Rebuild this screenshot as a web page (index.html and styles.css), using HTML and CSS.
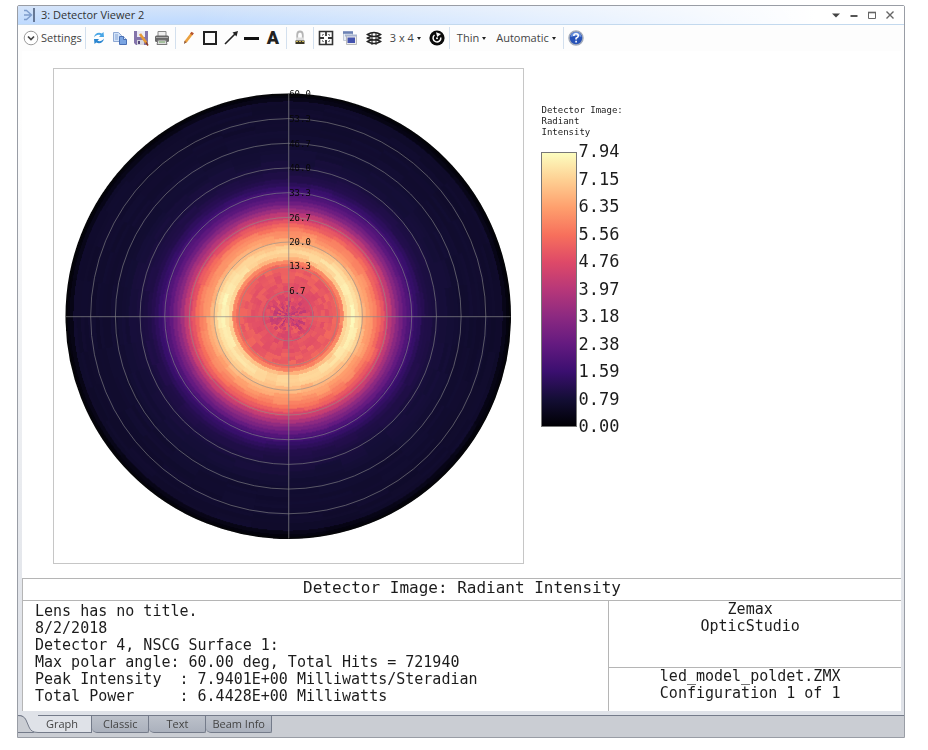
FILE: index.html
```html
<!DOCTYPE html>
<html lang="en">
<head>
<meta charset="utf-8">
<title>3: Detector Viewer 2</title>
<link rel="stylesheet" href="styles.css">
</head>
<body>
<main class="window">
  <header class="titlebar">
    <svg class="app-icon" width="14" height="14" viewBox="0 0 14 14" fill="none"><path d="M1 2.500h2.500L8.500 7l-5 4.500H1M1 7h7" stroke="#7d9ccc" stroke-width="1.400"/><path d="M11 0v14" stroke="#4d5e7c" stroke-width="1.600"/></svg>
    <h1 class="title">3: Detector Viewer 2</h1>
    <div class="window-buttons">
      <button type="button" aria-label="Window menu"><svg width="10" height="10" viewBox="0 0 10 10"><path d="M1 3.500h8L5 7.500z" fill="#444"/></svg></button>
      <button type="button" aria-label="Minimize"><svg width="10" height="10" viewBox="0 0 10 10"><path d="M1.500 6h7" stroke="#555" stroke-width="2"/></svg></button>
      <button type="button" aria-label="Maximize"><svg width="10" height="10" viewBox="0 0 10 10"><path d="M1.500 2v6.500h7V2" fill="none" stroke="#666"/><path d="M1 2.500h8" stroke="#666" stroke-width="1.600"/></svg></button>
      <button type="button" aria-label="Close"><svg width="10" height="10" viewBox="0 0 10 10"><path d="M1.500 1.500l7 7m0-7l-7 7" stroke="#666" stroke-width="1.400"/></svg></button>
    </div>
  </header>

  <nav class="toolbar" aria-label="Viewer tools">
    <div class="group">
      <button type="button" class="settings"><svg width="16" height="16" viewBox="0 0 16 16" fill="none"><circle cx="8" cy="8" r="6.800" fill="#fff" stroke="#999"/><path d="M5 6.500l3 3 3-3" stroke="#444" stroke-width="1.700"/></svg>Settings</button>
    </div>
    <div class="group icons">
      <button type="button" aria-label="Update"><svg width="16" height="16" viewBox="0 0 16 16"><path d="M3 7.500C3.500 3.500 7.500 1.500 10.800 3.500L12.500 2l.5 5H8l1.500-1.700C7 4.300 5 5 3 7.500z" fill="#49a6e6"/><path d="M13 8.500c-.5 4-4.500 6-7.800 4L3.500 14 3 9h5l-1.500 1.700c2.500 1 4.500.3 6.500-2.200z" fill="#2a86d0"/></svg></button>
      <button type="button" aria-label="Copy"><svg width="16" height="16" viewBox="0 0 16 16"><path d="M1.500 2.500h5l3 3v6h-8z" fill="#d3e3f8" stroke="#8fa9d4"/><path d="M3 5h3M3 7h3M3 9h3" stroke="#88a5d4"/><path d="M7.500 6.500h4l3 3v5h-7z" fill="#7ba5e2" stroke="#4a70b4"/><path d="M11.500 6.500v3h3" fill="#e3eefb" stroke="#4a70b4"/></svg></button>
      <button type="button" aria-label="Save"><svg width="16" height="16" viewBox="0 0 16 16"><path d="M1 1h14v14H3l-2-2z" fill="#8474ab"/><path d="M4 1h8v6H4z" fill="#eceaf4"/><path d="M4 10h7v5H4z" fill="#d7d6df"/><path d="M5 11h2v3H5z" fill="#584b7c"/><path d="M7 4l6.500 9" stroke="#e79a36" stroke-width="2.600"/><path d="M13 12.500l2 3" stroke="#8b3c20" stroke-width="1.500"/></svg></button>
      <button type="button" aria-label="Print"><svg width="16" height="16" viewBox="0 0 16 16"><path d="M4 1.500h8v5H4z" fill="#eee" stroke="#888"/><rect x="1" y="5.500" width="14" height="6.500" rx="1.500" fill="#686868"/><path d="M2 7.500h12" stroke="#aaa"/><path d="M4 10h8l1 4.500H3z" fill="#ddd" stroke="#777"/><path d="M5 12h6" stroke="#6da35f"/></svg></button>
    </div>
    <div class="group icons">
      <button type="button" aria-label="Pencil"><svg width="16" height="16" viewBox="0 0 16 16"><path d="M4.500 12L11 3.500" stroke="#eaa03e" stroke-width="2.800"/><path d="M10.300 4.500l1.400-2" stroke="#b55430" stroke-width="3"/><path d="M3 14l.5-3.300 2 1.600z" fill="#8a5130"/></svg></button>
      <button type="button" aria-label="Rectangle"><svg width="16" height="16" viewBox="0 0 16 16"><path d="M2 2h12v12H2z" fill="none" stroke="#222" stroke-width="2"/></svg></button>
      <button type="button" aria-label="Arrow"><svg width="16" height="16" viewBox="0 0 16 16"><path d="M2 14L12 4" stroke="#222" stroke-width="1.600"/><path d="M15 1l-1.500 5.500L9.500 2.500z" fill="#222"/></svg></button>
      <button type="button" aria-label="Line"><svg width="16" height="16" viewBox="0 0 16 16"><path d="M0 8.500h15" stroke="#111" stroke-width="3"/></svg></button>
      <button type="button" class="letter" aria-label="Text">A</button>
    </div>
    <div class="group">
      <button type="button" aria-label="Lock"><svg width="16" height="16" viewBox="0 0 16 16"><path d="M5.200 8V5a2.800 3.500 0 0 1 5.600 0v3" fill="none" stroke="#b5b5b5" stroke-width="1.800"/><path d="M4 7.500h8V11H4z" fill="#ddd"/><path d="M3.500 10.500h9v3.500h-9z" fill="#373322"/><path d="M4 11.500h8" stroke="#c9b452" stroke-dasharray="2 1"/></svg></button>
    </div>
    <div class="group wide">
      <button type="button" aria-label="Fit window"><svg width="16" height="16" viewBox="0 0 16 16" fill="none" stroke="#333"><path d="M1.500 1.500h13v13h-13z" stroke-width="1.600"/><path d="M8 2v4M8 10v4M2 8h4M10 8h4" stroke-width="1.800"/><path d="M4.500 6V4.500H6M10 4.500h1.500V6M11.500 10v1.500H10M6 11.500H4.500V10" stroke="#888"/></svg></button>
      <button type="button" aria-label="Clone window"><svg width="16" height="16" viewBox="0 0 16 16"><path d="M1.500 2.500h9v8h-9z" fill="#e7edf6" stroke="#c4cbd8"/><path d="M1 2.500h10" stroke="#6d82b4" stroke-width="2.600"/><path d="M4.500 5.500h10v9h-10z" fill="#eee" stroke="#bbb"/><path d="M3 5.500h12" stroke="#a9b4cf" stroke-width="2"/><path d="M5.500 7.500h7.500v5.500H5.500z" fill="#4453ae"/></svg></button>
      <button type="button" aria-label="Layers"><svg width="16" height="16" viewBox="0 0 16 16" fill="#fff" stroke="#222" stroke-width="1.500"><path d="M1.500 11.500q6.500-4 13 0q-6.500 4-13 0z"/><path d="M1.500 8q6.500-4 13 0q-6.500 4-13 0z"/><path d="M1.500 4.500q6.500-4 13 0q-6.500 4-13 0z"/><path d="M6 3v12M10 3v12" stroke-width="1"/></svg></button>
      <button type="button" class="menu">3 x 4<span class="caret"></span></button>
      <button type="button" aria-label="Reset view"><svg width="16" height="16" viewBox="0 0 16 16"><circle cx="8" cy="8" r="7.600" fill="#0b0b0b"/><path d="M5.500 5A3.900 3.900 0 1 0 11.800 7.500" fill="none" stroke="#fff" stroke-width="1.500"/><path d="M7 2.200l5 1.800-3.800 3z" fill="#fff"/><circle cx="8" cy="8.300" r="1" fill="#fff"/></svg></button>
    </div>
    <div class="group menus">
      <button type="button" class="menu">Thin<span class="caret"></span></button>
      <button type="button" class="menu">Automatic<span class="caret"></span></button>
    </div>
    <div class="group help">
      <button type="button" aria-label="Help"><svg width="16" height="16" viewBox="0 0 16 16"><circle cx="8" cy="8" r="7" fill="#2853b8" stroke="#a3abba" stroke-width="1.500"/><path d="M2.500 7a5.500 5 0 0 1 11 0q-5-2-11 0z" fill="#6e94dc"/><path d="M5.800 6q0-2.200 2.300-2.200T10.300 6Q10.300 7 8.100 8.300v1.200M8.100 10.700v1.700" fill="none" stroke="#fff" stroke-width="1.600"/></svg></button>
    </div>
  </nav>

  <section class="graph">
    <div class="view">
      <div class="plot">
        <canvas id="map" width="471" height="496"></canvas>
        <svg id="grid" viewBox="0 0 471 496" role="img" aria-label="Polar radiant intensity plot"></svg>
      </div>
      <aside class="legend">
        <p class="legend-title">Detector Image:<br>Radiant<br>Intensity</p>
        <div class="scale">
          <div class="ramp"></div>
          <ol class="ticks">
            <li>7.94</li><li>7.15</li><li>6.35</li><li>5.56</li><li>4.76</li><li>3.97</li><li>3.18</li><li>2.38</li><li>1.59</li><li>0.79</li><li>0.00</li>
          </ol>
        </div>
      </aside>
    </div>

    <div class="report">
      <h2 class="report-title">Detector Image: Radiant Intensity</h2>
      <pre class="details">Lens has no title.
8/2/2018
Detector 4, NSCG Surface 1:
Max polar angle: 60.00 deg, Total Hits = 721940
Peak Intensity  : 7.9401E+00 Milliwatts/Steradian
Total Power     : 6.4428E+00 Milliwatts</pre>
      <div class="source">
        <p>Zemax<br>OpticStudio</p>
        <p>led_model_poldet.ZMX<br>Configuration 1 of 1</p>
      </div>
    </div>
  </section>

  <footer class="tabs" role="tablist">
    <button type="button" role="tab" aria-selected="true" class="tab active"><svg class="slope" width="20" height="18" viewBox="0 0 20 18"><path d="M0 0h20v18Q13 18 11 12L8 4Q6 0 0 0z" fill="#dfe2e8"/><path d="M0 .5Q6 .5 8 5l3 7q2 5.500 9 5.500" fill="none" stroke="#747b8a"/></svg><span>Graph</span></button>
    <button type="button" role="tab" aria-selected="false" class="tab">Classic</button>
    <button type="button" role="tab" aria-selected="false" class="tab">Text</button>
    <button type="button" role="tab" aria-selected="false" class="tab">Beam Info</button>
  </footer>
</main>
<script src="plot.js"></script>
</body>
</html>
```
FILE: styles.css
```css
* { box-sizing: border-box; }

body {
  margin: 0;
  padding: 5px 23px 11px 17px;
  background: #fff;
  color: #1c1c1c;
  font: 11px/16px "Open Sans", "Noto Sans", sans-serif;
}

h1, h2, p, ol, pre { margin: 0; padding: 0; font: inherit; }
ol { list-style: none; }
svg, canvas { display: block; }

button {
  display: flex;
  align-items: center;
  margin: 0;
  padding: 0;
  border: 0;
  background: none;
  color: #444;
  font: inherit;
}

.window {
  border: 1px solid #999da5;
  border-radius: 2px 2px 0 0;
  background: linear-gradient(#fdfdfd 15%, #dfe2e8 90%);
}

/* Title bar */
.titlebar {
  display: flex;
  align-items: center;
  gap: 4px;
  height: 19px;
  padding: 0 9px 0 5px;
  border-bottom: 1px solid #c3d9ee;
  background: linear-gradient(90deg, rgba(255, 255, 255, 0) 20%, #fff 90%), linear-gradient(#d5e4f9, #bedaff);
}
.title { flex: 1; color: #333; }
.window-buttons { display: flex; gap: 8px; }

/* Toolbar */
.toolbar {
  display: flex;
  align-items: center;
  height: 26px;
  padding-left: 5px;
  background: #fdfdfd;
}
.group {
  display: flex;
  align-items: center;
  gap: 5px;
  height: 22px;
  padding: 0 5px;
  border-left: 1px solid #d3e0ee;
}
.group:first-child { padding: 0 3px 0 0; border: 0; }
.icons { padding: 0 5px; }
.wide { gap: 8px; padding: 0 4px; }
.menus { gap: 10px; padding: 0 7px; }
.help { padding: 0 4px; }
.settings { gap: 2px; }
.menu { gap: 3px; }
.letter {
  width: 16px;
  justify-content: center;
  font: 900 18px/16px Roboto, sans-serif;
  color: #222;
}
.caret {
  border: 2px solid transparent;
  border-top: 3px solid #222;
  border-bottom: 0;
}

/* Graph */
.graph {
  margin: 0 3px 4px 4px;
  background: #fff;
  font-family: "DejaVu Sans Mono", monospace;
}
.view {
  display: flex;
  gap: 17px;
  padding: 17px 0 14px 31px;
}
.plot {
  display: grid;
  flex: 0 1 55.6%;
  border: 1px solid #c6c6c6;
}
.plot > * { grid-area: 1 / 1; width: 100%; height: auto; }
#grid { font-size: 9px; }

.legend { padding-top: 37px; }
.legend-title { font-size: 9px; line-height: 11px; }
.scale {
  display: flex;
  gap: 1px;
  height: 302px;
}
.ramp {
  width: 36px;
  margin: 14px 0 13px;
  border: 1px solid #777;
  background: linear-gradient(0deg, #000004, #140e36, #3b0f70, #641a80, #8c2981, #b73779, #de4968, #f7705c, #fe9f6d, #fecf92, #fcfdbf);
}
.ticks {
  display: flex;
  flex-direction: column;
  justify-content: space-between;
  font-size: 17px;
  line-height: 27px;
}

/* Report block */
.report {
  display: grid;
  grid-template-columns: 2fr 1fr;
  border: 1px solid #b5b5b5;
  border-width: 1px 0 0 1px;
  font-size: 15px;
  line-height: 17px;
}
.report-title {
  grid-column: 1 / -1;
  padding-bottom: 4px;
  border-bottom: 1px solid #b5b5b5;
  font-size: 16px;
  text-align: center;
}
.details { padding: 2px 12px 6px; }
.source {
  display: grid;
  grid-template-rows: 3fr 2fr;
  border-left: 1px solid #b5b5b5;
  text-align: center;
}
.source p { padding-right: 10px; }
.source p + p { border-top: 1px solid #b5b5b5; }

/* Tabs */
.tabs {
  display: flex;
  height: 22px;
  border-top: 1px solid #747b8a;
  background: #cacdd3;
}
.tab {
  justify-content: center;
  height: 17px;
  padding: 0 11px;
  border: 1px solid #747b8a;
  border-width: 0 1px 1px 0;
  border-radius: 0 0 2px 5px;
  background: linear-gradient(#bcc1ca, #abb1bd);
}
.tab:nth-child(3) { padding: 0 17px; }
.tab:nth-child(4) { padding: 0 6px; }
.active {
  gap: 8px;
  padding: 0 13px 0 0;
  border-radius: 0;
  background: linear-gradient(90deg, #cacdd3 20px, #dfe2e8 20px);
}
```
FILE: plot.js
```js
(function () {
  var cx = 235, cy = 248, radius = 223, rings = 60, width = 471, height = 496;

  var magma = [[0, 0, 4], [20, 14, 54], [59, 15, 112], [100, 26, 128], [140, 41, 129],
    [183, 55, 121], [222, 73, 104], [247, 112, 92], [254, 159, 109], [254, 207, 146], [252, 253, 191]];

  // Relative intensity against distance from the axis.
  var profile = [[0, .56], [12, .58], [22, .61], [35, .635], [48, .66], [53, .71], [56, .83], [59, .92],
    [66, .95], [70, .91], [74, .86], [80, .8], [87, .74], [94, .65], [100, .56], [105, .47], [111, .37],
    [118, .28], [126, .2], [136, .14], [150, .11], [175, .09], [214, .08], [218, .03], [224, .01]];

  function level(r) {
    for (var i = 1; i < profile.length; i++) {
      var a = profile[i - 1], b = profile[i];
      if (r <= b[0]) return a[1] + (b[1] - a[1]) * (r - a[0]) / (b[0] - a[0]);
    }
    return 0;
  }

  function colour(v) {
    var t = Math.max(0, Math.min(.9999, v)) * 10, i = Math.floor(t), f = t - i;
    return magma[i].map(function (c, k) { return c + (magma[i + 1][k] - c) * f; });
  }

  function noise(a, b) {
    var s = Math.sin(a * 127.1 + b * 311.7) * 43758.5453;
    return (s - Math.floor(s)) * 2 - 1;
  }

  var cells = [];
  for (var ring = 0; ring < rings; ring++) {
    var r = (ring + .5) * radius / rings;
    var spread = r < 20 ? .075 : r < 50 ? .03 : r < 105 ? .018 : .006;
    cells.push([]);
    for (var s = 0; s < 36; s++) {
      var angle = (s + .5) * Math.PI / 18;
      var tilt = r > 56 && r < 75 ? .03 * Math.cos(2 * angle) : r < 118 && r >= 75 ? .015 * Math.sin(angle) : 0;
      cells[ring].push(colour(level(r) + tilt + spread * noise(ring + 1, s + 1)));
    }
  }

  var ctx = document.getElementById('map').getContext('2d');
  var image = ctx.createImageData(width, height);
  for (var y = 0; y < height; y++) {
    for (var x = 0; x < width; x++) {
      var dx = x + .5 - cx, dy = y + .5 - cy, d = Math.sqrt(dx * dx + dy * dy);
      if (d >= radius) continue;
      var sector = Math.floor((Math.atan2(dy, dx) / Math.PI + 1) * 18) % 36;
      var c = cells[Math.floor(d / radius * rings)][(sector + 18) % 36];
      var o = (y * width + x) * 4;
      image.data[o] = c[0];
      image.data[o + 1] = c[1];
      image.data[o + 2] = c[2];
      image.data[o + 3] = 255;
    }
  }
  ctx.putImageData(image, 0, 0);

  var svg = document.getElementById('grid');
  function add(name, attrs, text) {
    var el = document.createElementNS('http://www.w3.org/2000/svg', name);
    Object.keys(attrs).forEach(function (k) { el.setAttribute(k, attrs[k]); });
    if (text) el.textContent = text;
    svg.appendChild(el);
  }
  add('circle', { cx: cx, cy: cy, r: radius - .5, fill: 'none', stroke: '#050508', 'stroke-width': 2 });
  var labels = ['6.7', '13.3', '20.0', '26.7', '33.3', '40.0', '46.7', '53.3', '60.0'];
  labels.forEach(function (label, i) {
    var rr = radius * (i + 1) / 9;
    if (i < 8) add('circle', { cx: cx, cy: cy, r: rr, fill: 'none', stroke: '#8b8b8b', 'stroke-opacity': .6 });
  });
  add('path', { d: 'M' + (cx - radius) + ' ' + (cy + .5) + 'h' + 2 * radius + 'M' + (cx + .5) + ' ' + (cy - radius) + 'v' + 2 * radius, stroke: '#8b8b8b', 'stroke-opacity': .7 });
  labels.forEach(function (label, i) {
    add('text', { x: cx + 1, y: Math.round(cy - radius * (i + 1) / 9) + 3, fill: '#080808' }, label);
  });
})();
```
